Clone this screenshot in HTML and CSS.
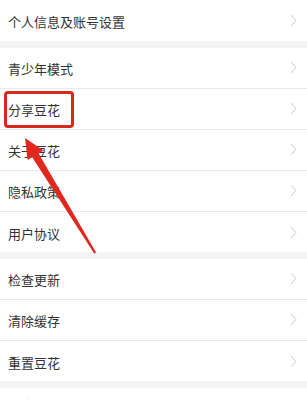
FILE: index.html
```html
<!DOCTYPE html>
<html lang="zh-CN">
<head>
<meta charset="utf-8">
<link rel="stylesheet" href="styles.css">
</head>
<body>
<div class="page">
  <div class="group">
    <div class="row first"><span class="label">个人信息及账号设置</span><svg class="chev" width="7" height="13" viewBox="0 0 7 13"><polyline points="1,1 6,6.5 1,12" fill="none" stroke="#cacaca" stroke-width="1"/></svg></div>
  </div>
  <div class="group">
    <div class="row"><span class="label">青少年模式</span><svg class="chev" width="7" height="13" viewBox="0 0 7 13"><polyline points="1,1 6,6.5 1,12" fill="none" stroke="#cacaca" stroke-width="1"/></svg></div>
    <div class="row"><span class="label">分享豆花</span><svg class="chev" width="7" height="13" viewBox="0 0 7 13"><polyline points="1,1 6,6.5 1,12" fill="none" stroke="#cacaca" stroke-width="1"/></svg><span class="mark"></span></div>
    <div class="row"><span class="label">关于豆花</span><svg class="chev" width="7" height="13" viewBox="0 0 7 13"><polyline points="1,1 6,6.5 1,12" fill="none" stroke="#cacaca" stroke-width="1"/></svg></div>
    <div class="row"><span class="label">隐私政策</span><svg class="chev" width="7" height="13" viewBox="0 0 7 13"><polyline points="1,1 6,6.5 1,12" fill="none" stroke="#cacaca" stroke-width="1"/></svg></div>
    <div class="row"><span class="label">用户协议</span><svg class="chev" width="7" height="13" viewBox="0 0 7 13"><polyline points="1,1 6,6.5 1,12" fill="none" stroke="#cacaca" stroke-width="1"/></svg></div>
  </div>
  <div class="group">
    <div class="row"><span class="label">检查更新</span><svg class="chev" width="7" height="13" viewBox="0 0 7 13"><polyline points="1,1 6,6.5 1,12" fill="none" stroke="#cacaca" stroke-width="1"/></svg></div>
    <div class="row"><span class="label">清除缓存</span><svg class="chev" width="7" height="13" viewBox="0 0 7 13"><polyline points="1,1 6,6.5 1,12" fill="none" stroke="#cacaca" stroke-width="1"/></svg></div>
    <div class="row"><span class="label">重置豆花</span><svg class="chev" width="7" height="13" viewBox="0 0 7 13"><polyline points="1,1 6,6.5 1,12" fill="none" stroke="#cacaca" stroke-width="1"/></svg></div>
  </div>
  <div class="group">
    <div class="row last"><span class="label faint">退出登录</span></div>
  </div>
  <svg class="arrow" width="307" height="400" viewBox="0 0 307 400">
    <polygon fill="#e0281f" points="25,138 43.5,150.5 38.6,153.4 96.1,252.4 94.2,253.6 32.2,157.2 27.7,160"/>
  </svg>
</div>
</body>
</html>
```
FILE: styles.css
```css
* { box-sizing: border-box; }
html, body { margin: 0; padding: 0; }
body {
  background: #f4f4f4;
  font-family: "Noto Sans CJK SC", "Noto Sans", sans-serif;
  width: 307px;
  height: 400px;
  overflow: hidden;
}
.page { position: relative; width: 307px; height: 400px; overflow: hidden; }
.group {
  background: #fff;
  margin-bottom: 7px;
  display: flex;
  flex-direction: column;
}
.row {
  position: relative;
  height: 41px;
  padding: 0 8px 1px 8px;
  display: flex;
  align-items: center;
  justify-content: space-between;
  border-bottom: 1px solid #e9e9e9;
}
.row:last-child { height: 40px; border-bottom: none; padding-bottom: 0; }
.group:first-child .row { height: 41px; }
.row.last { align-items: flex-start; padding-top: 8px; }
.label {
  font-size: 13px;
  color: #333;
  line-height: 1;
  padding-top: 2px;
}
.label.faint { color: #e6e6e6; }
.chev {
  display: block;
  margin-right: 2px;
}
.mark {
  position: absolute;
  left: 4px;
  top: 2px;
  width: 70px;
  height: 37px;
  border: 3px solid #d9271d;
  border-radius: 4px;
}
.arrow { position: absolute; left: 0; top: 0; pointer-events: none; }
```
